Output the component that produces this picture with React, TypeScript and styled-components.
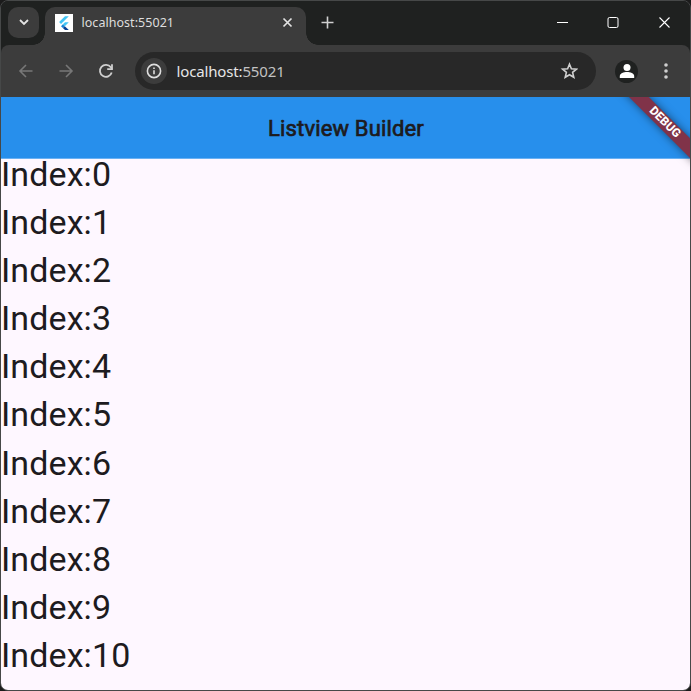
import React from "react";
import styled, { createGlobalStyle } from "styled-components";

const GlobalStyle = createGlobalStyle`
  *, *::before, *::after { box-sizing: border-box; }
  html, body { margin: 0; padding: 0; background: #1b1b1b; overflow: hidden; }
`;

const Window = styled.div`
  width: 691px;
  height: 691px;
  display: flex;
  flex-direction: column;
  border: 1px solid #464848;
  border-radius: 8px;
  overflow: hidden;
  background: #1f2120;
  font-family: "Noto Sans", "Open Sans", sans-serif;
`;

const TabStrip = styled.header`
  height: 44px;
  flex: none;
  display: flex;
  align-items: flex-start;
  padding: 6px 0 0 7px;
  background: #1f2120;
`;

const TabSearch = styled.button`
  width: 31px;
  height: 31px;
  padding: 0;
  border: 0;
  border-radius: 10px;
  background: #3c3c3c;
  display: grid;
  place-items: center;
`;

const Tab = styled.div`
  position: relative;
  width: 261px;
  height: 38px;
  margin-left: 6px;
  padding: 0 13px 7px 10px;
  display: flex;
  align-items: center;
  border-radius: 10px 10px 0 0;
  background: #3c3c3c;

  &::before, &::after {
    content: "";
    position: absolute;
    bottom: 0;
    width: 12px;
    height: 12px;
  }
  &::before {
    left: -12px;
    background: radial-gradient(circle at 0 0, transparent 11.5px, #3c3c3c 12px);
  }
  &::after {
    right: -12px;
    background: radial-gradient(circle at 100% 0, transparent 11.5px, #3c3c3c 12px);
  }
`;

const TabTitle = styled.span`
  flex: 1;
  margin: 1px 0 0 8.5px;
  color: #dedede;
  font-size: 12.5px;
  line-height: 18px;
  letter-spacing: 0.04px;
`;

const NewTab = styled.div`
  width: 20px;
  height: 31px;
  margin-left: 11px;
  display: grid;
  place-items: center;
`;

const WindowControls = styled.div`
  display: flex;
  height: 31px;
  margin-left: auto;
  padding-right: 19px;
  align-items: center;
  gap: 38px;
`;

const Toolbar = styled.nav`
  height: 52px;
  flex: none;
  display: flex;
  align-items: center;
  padding: 0 16px 0 17px;
  border-radius: 8px 8px 0 0;
  background: #3c3c3c;
`;

const NavButtons = styled.div`
  display: flex;
  gap: 24px;
  width: 117px;
`;

const AddressBar = styled.div`
  width: 461px;
  height: 38px;
  padding: 0 18px 0 6px;
  display: flex;
  align-items: center;
  border-radius: 19px;
  background: #282828;
`;

const SiteInfo = styled.span`
  width: 26px;
  height: 26px;
  border-radius: 50%;
  display: grid;
  place-items: center;
  background: #3c3c3c;
`;

const Url = styled.span`
  flex: 1;
  margin-left: 9.5px;
  color: #e6e6e6;
  font-size: 15px;
  line-height: 20px;
  letter-spacing: -0.15px;
`;

const Port = styled.span`
  color: #c2c2c2;
`;

const Avatar = styled.span`
  width: 23px;
  height: 23px;
  margin-left: 19px;
  margin-right: auto;
  border-radius: 50%;
  display: grid;
  place-items: center;
  background: #1f2120;
`;

const Page = styled.main`
  position: relative;
  flex: 1;
  min-height: 0;
  overflow: hidden;
  background: #fef7ff;
  color: #1d1b20;
  font-family: Roboto, sans-serif;
`;

const AppBar = styled.div`
  height: 62px;
  display: flex;
  align-items: center;
  justify-content: center;
  padding: 2px 0 0 1px;
  border-bottom: 1px solid #6ab1f3;
  background: #278fec;
`;

const AppTitle = styled.h1`
  margin: 0;
  font-size: 22px;
  line-height: 28px;
  font-weight: 400;
  letter-spacing: 0.15px;
  -webkit-text-stroke: 0.7px #1d1b20;
`;

const Ribbon = styled.div`
  position: absolute;
  top: 18px;
  right: -25.5px;
  width: 104px;
  height: 13.5px;
  padding-left: 2px;
  transform: rotate(45deg);
  background: #803349;
  box-shadow: 0 0 8px rgba(0, 0, 0, 0.5);
  color: #fff;
  font-size: 12px;
  line-height: 13.5px;
  font-weight: 800;
  text-align: center;
`;

const List = styled.ul`
  margin: -1px 0 0;
  padding: 0;
  list-style: none;
`;

const ListRow = styled.li`
  height: 48.1px;
  font-size: 34px;
  line-height: 32px;
  letter-spacing: 0.1px;
  white-space: nowrap;
`;

const Icon = styled.svg`
  display: block;
  flex: none;
  fill: none;
`;

const rows = Array.from({ length: 11 }, (_, index) => index);

function FlutterLogo() {
  return (
    <Icon width="18" height="18" viewBox="0 0 18 18">
      <path fill="#fff" d="M0 0h18v18H0z" />
      <path fill="#43c5f5" d="M10 2.2h3.8L6 10 4.1 8.1zM10 8.2h3.8l-4 4-1.9-1.9z" />
      <path fill="#1685d6" d="m6 12.2 1.9-1.9 1.9 1.9-1.9 1.9z" />
      <path fill="#073f95" d="m7.9 14.1 1.9-1.9 4 3.8H10z" />
    </Icon>
  );
}

export default function App() {
  return (
    <>
      <GlobalStyle />
      <Window>
        <TabStrip>
          <TabSearch aria-label="Search tabs">
            <Icon width="10" height="7" viewBox="0 0 10 7" stroke="#e3e3e3" strokeWidth="1.8">
              <path d="m1 1 4 4 4-4" />
            </Icon>
          </TabSearch>
          <Tab>
            <FlutterLogo />
            <TabTitle>localhost:55021</TabTitle>
            <Icon width="11" height="11" viewBox="0 0 11 11" stroke="#e3e3e3" strokeWidth="1.7">
              <path d="m1.5 1.5 8 8m0-8-8 8" />
            </Icon>
          </Tab>
          <NewTab>
            <Icon width="13" height="13" viewBox="0 0 13 13" stroke="#d0d0d0" strokeWidth="1.6">
              <path d="M6.5.5v12M.5 6.5h12" />
            </Icon>
          </NewTab>
          <WindowControls>
            <Icon width="13" height="13" viewBox="0 0 13 13" stroke="#fff">
              <path d="M1 6.5h11" />
            </Icon>
            <Icon width="13" height="13" viewBox="0 0 13 13" stroke="#fff">
              <rect x="1" y="1.5" width="10" height="10" rx="1.5" />
            </Icon>
            <Icon width="13" height="13" viewBox="0 0 13 13" stroke="#fff" strokeWidth="1.1">
              <path d="m1.5 1.5 10 10m0-10-10 10" />
            </Icon>
          </WindowControls>
        </TabStrip>

        <Toolbar>
          <NavButtons>
            <Icon width="16" height="16" viewBox="0 0 16 16" stroke="#777" strokeWidth="1.6">
              <path d="M14.5 8h-12M8 2 2 8l6 6" />
            </Icon>
            <Icon width="16" height="16" viewBox="0 0 16 16" stroke="#777" strokeWidth="1.6">
              <path d="M1.5 8h12M8 2l6 6-6 6" />
            </Icon>
            <Icon width="16" height="16" viewBox="0 0 16 16" stroke="#cfcfcf" strokeWidth="1.8">
              <path d="M13.7 9.5A6 6 0 1 1 12.8 4.3L14 5.8" />
              <path d="M14 1.3v4.8H9.2" />
            </Icon>
          </NavButtons>
          <AddressBar>
            <SiteInfo>
              <Icon width="16" height="16" viewBox="0 0 16 16" stroke="#dedede" strokeWidth="1.6">
                <circle cx="8" cy="8" r="6.6" />
                <path d="M8 7.2v4M8 4.5v1.6" />
              </Icon>
            </SiteInfo>
            <Url>
              localhost:<Port>55021</Port>
            </Url>
            <Icon width="18" height="18" viewBox="0 0 18 18" stroke="#cfcfcf" strokeWidth="1.6">
              <path d="m9.5 2.2 1.9 4.6 5 .4-3.8 3.2 1.2 4.9-4.3-2.6-4.3 2.6 1.2-4.9-3.8-3.2 5-.4z" />
            </Icon>
          </AddressBar>
          <Avatar>
            <Icon width="16" height="16" viewBox="0 0 16 16">
              <circle cx="8" cy="4.5" r="3.5" fill="#fff" />
              <path fill="#fff" d="M.8 15v-2c0-2.6 4-3.9 7.2-3.9s7.2 1.3 7.2 3.9v2z" />
            </Icon>
          </Avatar>
          <Icon width="16" height="18" viewBox="0 0 16 18">
            <g fill="#cfcfcf">
              <circle cx="8" cy="3" r="1.8" />
              <circle cx="8" cy="9" r="1.8" />
              <circle cx="8" cy="15" r="1.8" />
            </g>
          </Icon>
        </Toolbar>

        <Page>
          <AppBar>
            <AppTitle>Listview Builder</AppTitle>
            <Ribbon>DEBUG</Ribbon>
          </AppBar>
          <List>
            {rows.map((index) => (
              <ListRow key={index}>Index:{index}</ListRow>
            ))}
          </List>
        </Page>
      </Window>
    </>
  );
}
